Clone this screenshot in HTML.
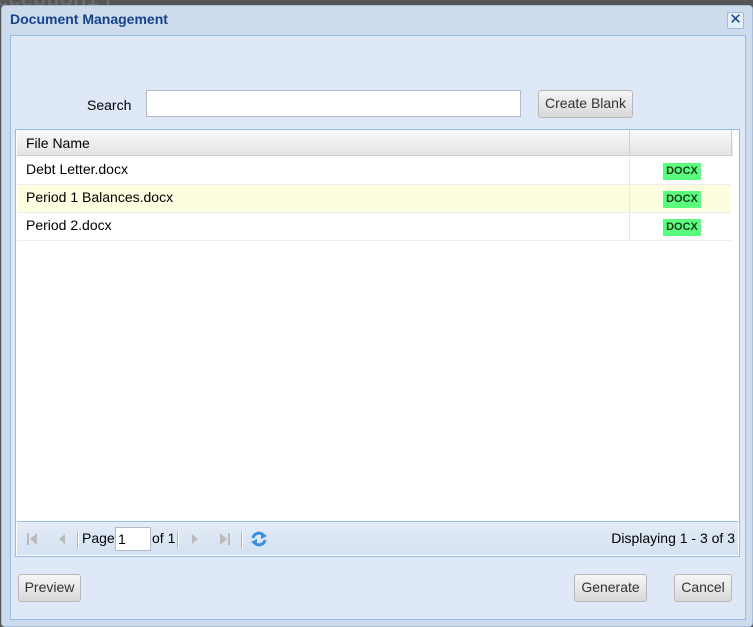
<!DOCTYPE html>
<html><head><style>
*{box-sizing:border-box;margin:0;padding:0}
body{width:753px;height:627px;background:#555;position:relative;overflow:hidden;font-family:"Liberation Sans",Arial,sans-serif;font-size:14px;color:#000}
.bgtext{position:absolute;left:-4px;top:-14px;font-size:22px;font-weight:bold;color:#6a6a6a}
.win{position:absolute;left:1px;top:5px;width:752px;height:622px;background:#cddbec;border:1px solid #a9bfd6;border-radius:4px}
.title{position:absolute;left:8px;top:5px;font-weight:bold;font-size:14px;color:#15428b}
.close{position:absolute;right:8px;top:6px;width:17px;height:17px;border:1px solid #99bbe8;border-radius:2px;background:#e6eef8;color:#15428b;font-size:15px;line-height:14px;text-align:center}
.body{position:absolute;left:8px;top:29px;width:736px;height:585px;background:#dfe8f6;border:1px solid #99bbe8}
.lbl{position:absolute;left:76px;top:61px;font-size:14px}
.inp{position:absolute;left:135px;top:54px;width:375px;height:27px;background:#fff;border:1px solid #b5b8c8}
.btn{position:absolute;height:28px;border:1px solid #b8b8b8;border-radius:3px;background:linear-gradient(#f6f6f6,#e4e4e4 60%,#d8d8d8);font-size:14px;color:#333;text-align:center;line-height:25px}
.grid{position:absolute;left:4px;top:93px;width:725px;height:428px;border:1px solid #99bbe8;background:#fff}
.hdr{position:absolute;left:1px;top:0;width:716px;height:26px;background:linear-gradient(#f9f9f9,#e3e4e6);border-bottom:1px solid #d0d0d0}
.row{position:absolute;left:1px;width:714px;height:28px;border-bottom:1px solid #ededed}
.c1{position:absolute;left:9px;top:4px}
.div{position:absolute;left:612px;top:0;bottom:0;border-left:1px solid #e6e6e6}
.tag{position:absolute;left:646px;top:6px;width:38px;height:17px;background:#5bfd7f;font-size:11px;font-weight:bold;color:#1a3a1a;text-align:center;line-height:17px}
.tb{position:absolute;left:1px;top:391px;width:721px;height:34px;background:linear-gradient(#e4ecf7,#d3e1f1);border-top:1px solid #99bbe8}
.sep{position:absolute;top:9px;width:2px;height:17px;border-left:1px solid #99bbe8;border-right:1px solid #fff}
</style></head><body>
<div class="bgtext">ecebtion1 |</div>
<div class="win">
<div class="title">Document Management</div>
<div class="close">✕</div>
<div class="body">
<div class="lbl">Search</div>
<div class="inp"></div>
<div class="btn" style="left:527px;top:54px;width:95px">Create Blank</div>
<div class="grid">
<div class="hdr"><div class="c1" style="top:5px">File Name</div><div class="div" style="border-left-color:#d0d0d0"></div><div style="position:absolute;left:714px;top:0;bottom:0;border-left:1px solid #d0d0d0"></div></div>
<div class="row" style="top:27px"><div class="c1">Debt Letter.docx</div><div class="div"></div><div class="tag">DOCX</div></div>
<div class="row" style="top:55px;background:#fdfde0"><div class="c1">Period 1 Balances.docx</div><div class="div"></div><div class="tag">DOCX</div></div>
<div class="row" style="top:83px"><div class="c1">Period 2.docx</div><div class="div"></div><div class="tag">DOCX</div></div>
<div class="tb">
<svg style="position:absolute;left:8px;top:9px" width="60" height="16"><g fill="#bbb"><rect x="2" y="2" width="2" height="12"/><path d="M12 2 L5 8 L12 14Z"/><path d="M40 3 L34 8 L40 13Z"/></g></svg>
<div class="sep" style="left:60px"></div>
<div style="position:absolute;left:65px;top:8px">Page</div>
<div style="position:absolute;left:98px;top:5px;width:36px;height:24px;background:#fff;border:1px solid #b5b8c8;padding:2px 2px;line-height:18px">1</div>
<div style="position:absolute;left:135px;top:8px">of 1</div>
<div class="sep" style="left:160px"></div>
<svg style="position:absolute;left:170px;top:9px" width="60" height="16"><g fill="#bbb"><path d="M5 3 L11 8 L5 13Z"/><path d="M33 2 L40 8 L33 14Z"/><rect x="41" y="2" width="2" height="12"/></g></svg>
<div class="sep" style="left:224px"></div>
<svg style="position:absolute;left:232px;top:7px" width="20" height="20"><g fill="none" stroke="#3a8ee6" stroke-width="3"><path d="M4 9 A6 6 0 0 1 15 7"/><path d="M16 11 A6 6 0 0 1 5 13"/></g><path d="M12 3 L18 7 L12 10Z M8 10 L2 13 L8 17Z" fill="#3a8ee6"/></svg>
<div style="position:absolute;right:3px;top:8px">Displaying 1 - 3 of 3</div>
</div>
</div>
<div class="btn" style="left:7px;top:538px;width:63px">Preview</div>
<div class="btn" style="left:563px;top:538px;width:73px">Generate</div>
<div class="btn" style="left:663px;top:538px;width:58px">Cancel</div>
</div>
</div>
</body></html>
